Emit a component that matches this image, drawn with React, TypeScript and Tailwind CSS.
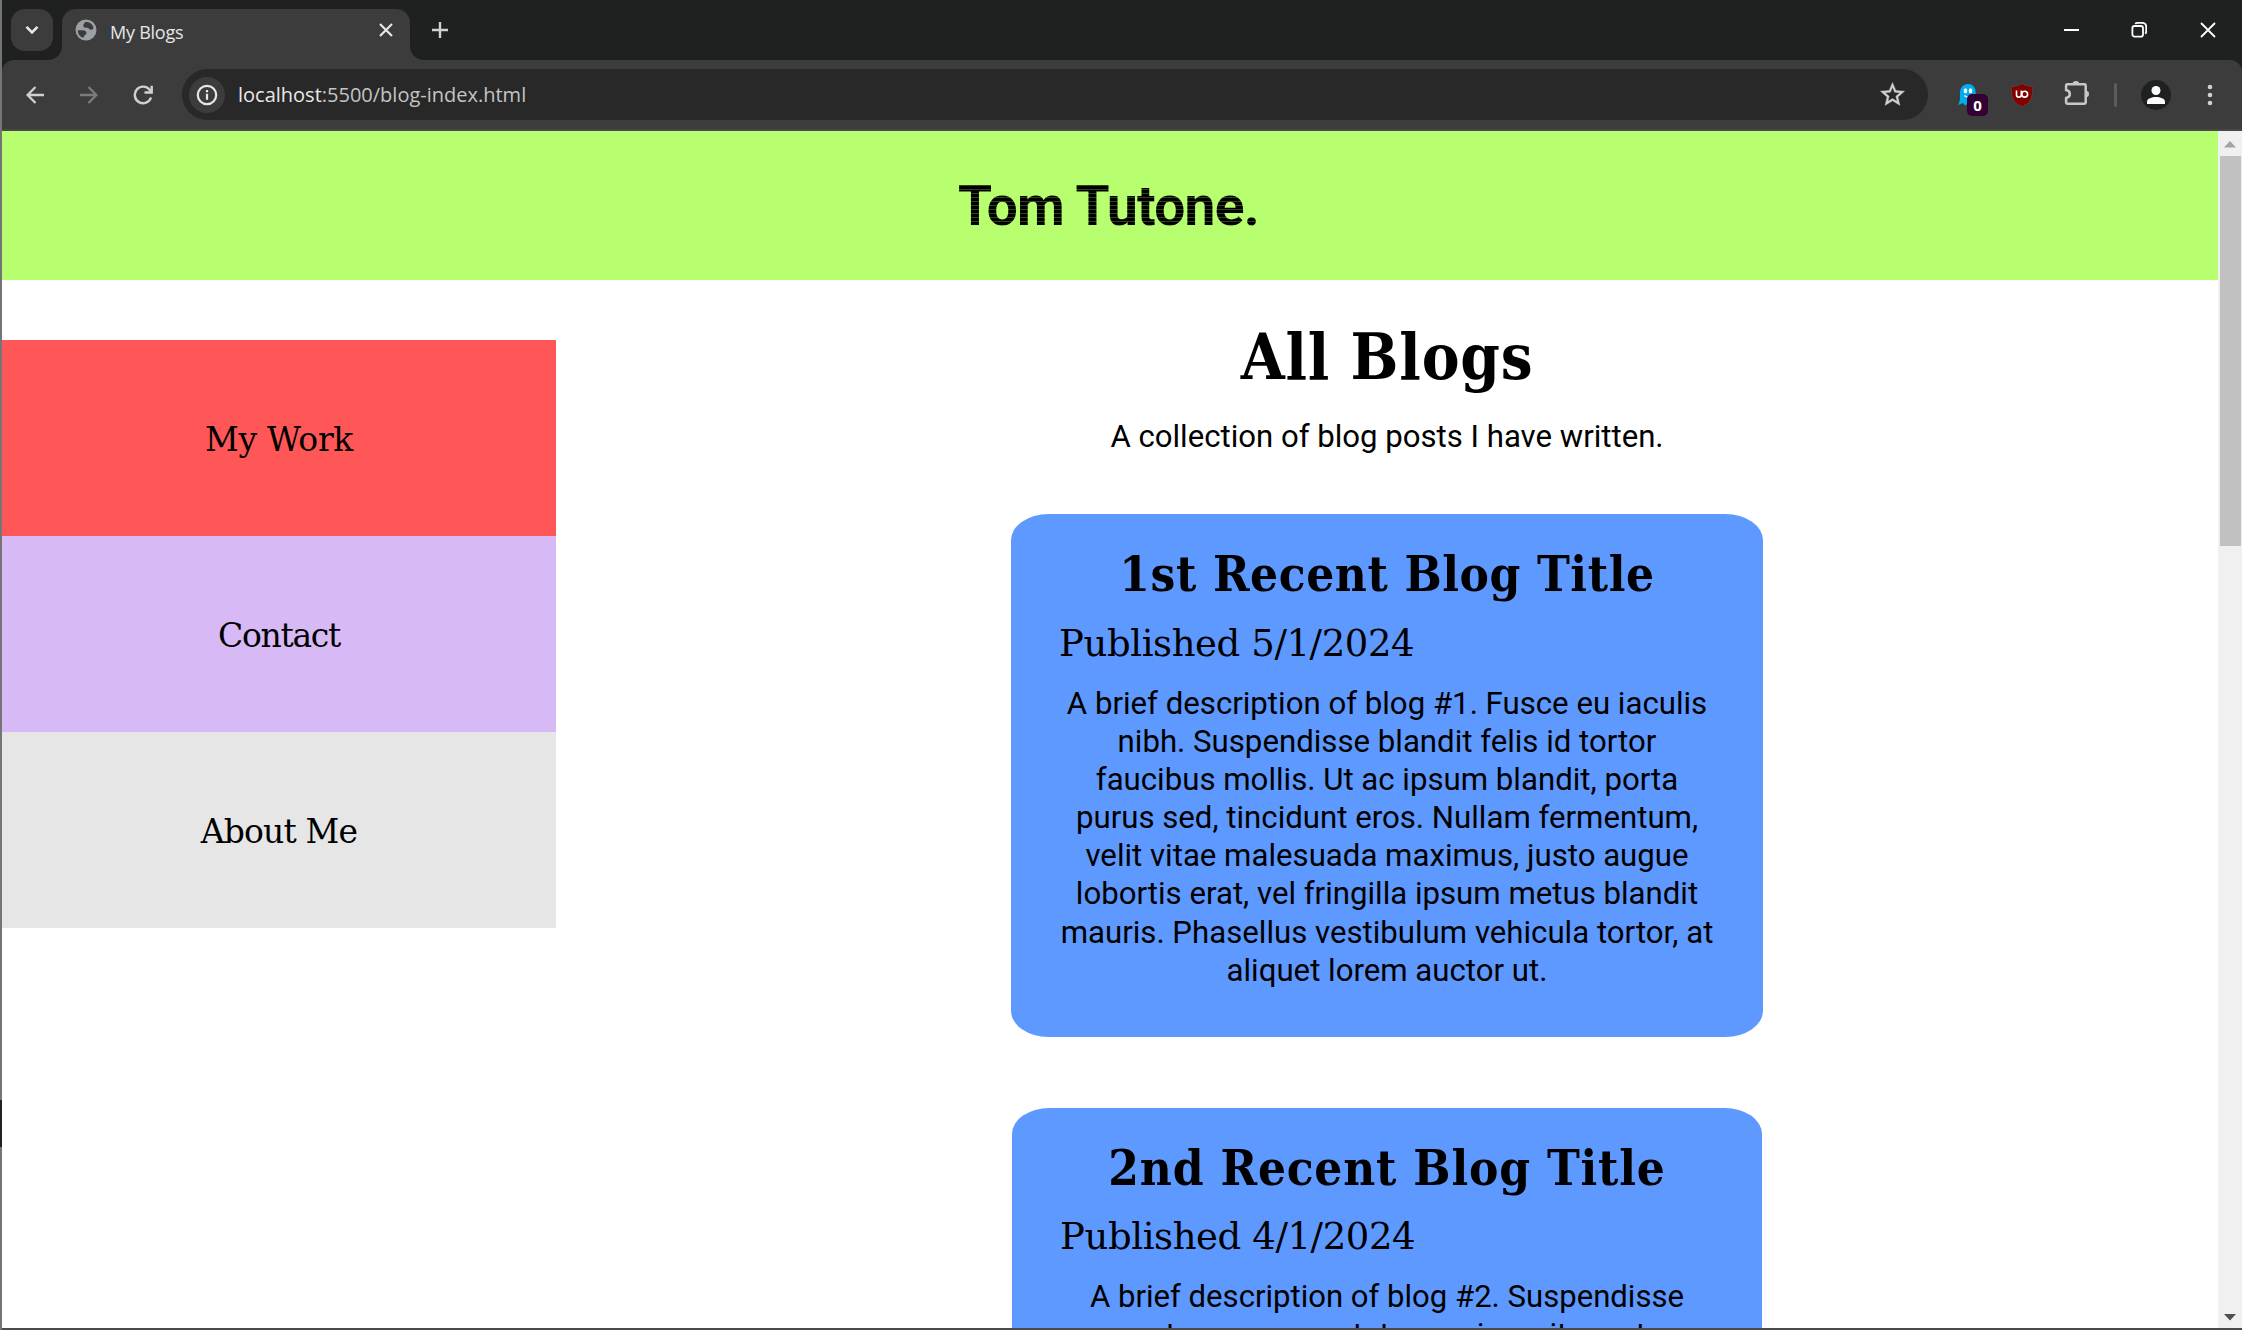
import type { ReactNode } from "react";

function Globe() {
  return (
    <svg viewBox="0 0 22 22" className="h-[22px] w-[22px]">
      <circle cx="11" cy="11" r="10.500" fill="#9aa0a6" />
      <path d="M10 3.200c1.800-.5 4-.1 5.500 1 1.600 1.200 2.700 2.800 3 4.800-.5 1.500-1.700 2-3 1.800-1.500-.3-1.600-1.700-3-2-1.200-.2-2.300.5-3.300-.4C8.200 7.300 8 6 8.700 5.200 9.300 4.500 9.200 3.700 10 3.200z" fill="#3c3c3c" />
      <path d="M2.800 11.200h5c1.900 0 3.600 1 3.600 2.800 0 1.500-1 2-1.900 2.400-.8.500-.3 1.700-1.300 2.400C5 17.700 2.800 14.700 2.800 11.200z" fill="#3c3c3c" />
    </svg>
  );
}

function Cross({ size, width }: { size: number; width: number }) {
  return (
    <svg width={size} height={size} viewBox={`0 0 ${size} ${size}`} stroke="currentColor" strokeWidth={width} fill="none">
      <path d={`M1 1L${size - 1} ${size - 1}M${size - 1} 1L1 ${size - 1}`} />
    </svg>
  );
}

function TitleBar() {
  return (
    <div className="flex h-[60px] bg-[#1f2120] pl-[9px] text-white">
      <div className="mt-[9px] flex h-[42px] w-[42px] items-center justify-center rounded-[14px] bg-[#3c3c3c]">
        <svg width="14" height="10" viewBox="0 0 14 10" fill="none" stroke="#e8e8e8" strokeWidth="2.6">
          <path d="M1.5 1.8L7 7.3l5.5-5.5" />
        </svg>
      </div>
      <div className="relative ml-[9px] mt-[9px] flex h-[51px] w-[348px] items-center rounded-t-[14px] bg-[#3c3c3c] pb-[9px]">
        <svg width="14" height="14" className="absolute -left-[14px] bottom-0" fill="#3c3c3c">
          <path d="M14 0v14H0A14 14 0 0 0 14 0z" />
        </svg>
        <svg width="14" height="14" className="absolute -right-[14px] bottom-0" fill="#3c3c3c">
          <path d="M0 0v14h14A14 14 0 0 1 0 0z" />
        </svg>
        <span className="ml-[13px]">
          <Globe />
        </span>
        <span className="ml-[13px] mt-[3px] flex-1 font-['Open_Sans',sans-serif] text-[18px] leading-6 tracking-[-0.25px] text-[#e6e6e6]">
          My Blogs
        </span>
        <span className="mr-[17px] text-[#e6e6e6]">
          <Cross size={14} width={2.2} />
        </span>
      </div>
      <div className="flex w-[60px] items-center justify-center">
        <svg width="16" height="16" viewBox="0 0 16 16" stroke="#d2d2d2" strokeWidth="2.4">
          <path d="M8 0v16M0 8h16" />
        </svg>
      </div>
      <div className="ml-auto flex items-center">
        <div className="flex w-[68px] justify-center">
          <div className="h-[2px] w-[15px] bg-white" />
        </div>
        <div className="flex w-[68px] justify-center">
          <svg width="16" height="16" viewBox="0 0 16 16" fill="none" stroke="white" strokeWidth="1.8">
            <rect x="1.4" y="4" width="10.6" height="10.6" rx="2.2" />
            <path d="M4.2 1.9c.6-.7 1.3-1 2.2-1H11c2.600 0 4.200 1.600 4.200 4.200V9.500c0 .9-.3 1.700-1 2.300" />
          </svg>
        </div>
        <div className="flex w-[69px] justify-center">
          <Cross size={16} width={1.8} />
        </div>
      </div>
    </div>
  );
}

function Slot({ children }: { children: ReactNode }) {
  return <div className="flex h-full w-[54px] shrink-0 items-center justify-center">{children}</div>;
}

function Toolbar() {
  return (
    <div className="bg-[#1f2120]">
      <div className="flex h-[71px] items-center rounded-t-[12px] border-b-2 border-[#484848] bg-[#3c3c3c] pl-[6px]">
        <Slot>
          <svg width="18" height="18" viewBox="0 0 18 18" fill="none" stroke="#d0d0d0" strokeWidth="2.3">
            <path d="M18 9H2M9.500 1L1.600 9l7.900 8" />
          </svg>
        </Slot>
        <Slot>
          <svg width="18" height="18" viewBox="0 0 18 18" fill="none" stroke="#7b7b7b" strokeWidth="2.3">
            <path d="M0 9h16M8.500 1l7.900 8-7.900 8" />
          </svg>
        </Slot>
        <Slot>
          <svg width="20" height="20" viewBox="0 0 20 20" fill="none" stroke="#d0d0d0" strokeWidth="2.4">
            <path d="M18 12.500A8.300 8.300 0 1 1 16.800 5l1.700 2" />
            <path d="M18.700 .8V7.500H11.500" />
          </svg>
        </Slot>
        <div className="ml-[12px] flex h-[51px] w-[1746px] shrink-0 items-center rounded-full bg-[#282828] pl-[7px]">
          <div className="flex h-[36px] w-[36px] items-center justify-center rounded-full bg-[#3c3c3c]">
            <svg width="22" height="22" viewBox="0 0 22 22" fill="none" stroke="#e8e8e8" strokeWidth="2.2">
              <circle cx="11" cy="11" r="9.200" />
              <path d="M11 9.800v6M11 6v2.200" />
            </svg>
          </div>
          <p className="ml-[13px] font-['Open_Sans',sans-serif] text-[20px] leading-7 text-[#c4c4c4]">
            <span className="text-[#e8e8e8]">localhost</span>:5500/blog-index.html
          </p>
          <svg viewBox="0 0 24 24" className="ml-auto mr-[21px] h-[29px] w-[29px]" fill="#d0d0d0" stroke="#d0d0d0" strokeWidth=".3">
            <path d="M22 9.240l-7.190-.62L12 2 9.190 8.630 2 9.240l5.460 4.730L5.820 21 12 17.270 18.180 21l-1.630-7.030L22 9.240zM12 15.400l-3.760 2.270 1-4.280-3.320-2.880 4.380-.38L12 6.100l1.710 4.040 4.380.38-3.320 2.880 1 4.280L12 15.400z" />
          </svg>
        </div>
        <div className="ml-[13px] flex h-full items-center">
          <Slot>
            <div className="relative h-[22px] w-[20px]">
              <svg width="20" height="22" viewBox="0 0 20 22">
                <path d="M2 9C2 3.500 5.400 0 10 0s7.600 3.500 7.600 8v6L19 20l-3.500-.5-2.500 2-3-2-3 2-2-2.500L0 21c1.600-2.500 2-5 2-8z" fill="#00aef0" />
                <ellipse cx="7.500" cy="6.800" rx="1.800" ry="2.500" fill="white" />
                <ellipse cx="12.500" cy="6.800" rx="1.800" ry="2.500" fill="white" />
                <path d="M6.500 11.500c2 2 5 2 7 0" stroke="white" strokeWidth="1.300" fill="none" />
              </svg>
              <span className="absolute left-[9px] top-[10px] flex h-[22px] w-[21px] items-center justify-center rounded-[5px] bg-[#330033] pt-[2px] font-['Open_Sans',sans-serif] text-[15px] font-bold leading-none text-white">
                0
              </span>
            </div>
          </Slot>
          <Slot>
            <svg width="22" height="24" viewBox="0 0 22 24" className="-ml-px">
              <path d="M11 .4C8 2.600 4.500 3.400.5 3.400 0 13 1.500 20 11 23.600 20.500 20 22 13 21.500 3.400 17.500 3.400 14 2.600 11 .4z" fill="#800000" stroke="#6e4a4a" strokeWidth=".6" />
              <path d="M5.500 7.500v4.200a2.400 2.400 0 0 0 4.800 0V7.500" fill="none" stroke="white" strokeWidth="1.600" />
              <circle cx="13.700" cy="11.200" r="2.900" fill="none" stroke="white" strokeWidth="1.600" />
            </svg>
          </Slot>
          <Slot>
            <svg width="26" height="26" viewBox="0 0 26 26" className="-mt-[3px] ml-[2px]" fill="none" stroke="#c8c8c8" strokeWidth="2.500">
              <path d="M3.300 4.300H20.500a1.200 1.200 0 0 1 1.200 1.200V22.500a1.200 1.200 0 0 1-1.200 1.200H3.300a1.200 1.200 0 0 1-1.200-1.200V18c5-1 5-7 0-8V5.500a1.200 1.200 0 0 1 1.200-1.200z" />
              <path d="M8.500 4.300a3.400 3.400 0 0 1 6.800 0zM21.700 10.800a3.300 3.300 0 0 1 0 6.600z" fill="#c8c8c8" stroke="none" />
            </svg>
          </Slot>
          <div className="flex w-[26px] justify-center">
            <div className="-ml-px h-[24px] w-[3px] rounded-full bg-[#5c5c5c]" />
          </div>
          <Slot>
            <div className="flex h-[30px] w-[30px] items-center justify-center rounded-full bg-[#1f2120]">
              <svg width="18" height="18" viewBox="0 0 18 18" fill="white">
                <circle cx="9" cy="4.500" r="4.500" />
                <path d="M0 18v-2.300C0 12.500 5 11 9 11s9 1.500 9 4.700V18z" />
              </svg>
            </div>
          </Slot>
          <Slot>
            <svg width="6" height="22" viewBox="0 0 6 22" fill="#d0d0d0">
              <circle cx="3" cy="3" r="2.300" />
              <circle cx="3" cy="11" r="2.300" />
              <circle cx="3" cy="19" r="2.300" />
            </svg>
          </Slot>
        </div>
      </div>
    </div>
  );
}

function SideNav() {
  const base =
    "flex h-[196px] items-center justify-center pt-[4px] font-['DejaVu_Serif',serif] text-[33px] leading-[40px]";
  return (
    <nav className="mt-[60px] w-[554px] shrink-0">
      <a className={`${base} bg-[#ff5757] tracking-[-0.3px]`}>My Work</a>
      <a className={`${base} bg-[#d7b9f5] tracking-[-1.3px]`}>Contact</a>
      <a className={`${base} bg-[#e6e6e6] tracking-[-0.85px]`}>About Me</a>
    </nav>
  );
}

const firstPost = [
  "A brief description of blog #1. Fusce eu iaculis",
  "nibh. Suspendisse blandit felis id tortor",
  "faucibus mollis. Ut ac ipsum blandit, porta",
  "purus sed, tincidunt eros. Nullam fermentum,",
  "velit vitae malesuada maximus, justo augue",
  "lobortis erat, vel fringilla ipsum metus blandit",
  "mauris. Phasellus vestibulum vehicula tortor, at",
  "aliquet lorem auctor ut.",
];

const secondPost = [
  "A brief description of blog #2. Suspendisse",
  "erat urna consectetur a mi eu sit amet,",
];

function Lines({ lines }: { lines: string[] }) {
  return (
    <>
      {lines.map((line) => (
        <span key={line} className="block whitespace-nowrap">
          {line}
        </span>
      ))}
    </>
  );
}

export default function App() {
  return (
    <div className="flex h-[1330px] w-[2242px] overflow-hidden bg-white text-black">
      <div className="flex w-[2px] shrink-0 flex-col bg-[#757575]">
        <div className="mt-[1100px] h-[47px] bg-[#222222]" />
      </div>
      <div className="flex w-[2240px] flex-col">
        <TitleBar />
        <Toolbar />
        <div className="flex h-[1197px] overflow-hidden">
          <div className="flex-1 overflow-hidden">
            <header className="flex h-[149px] items-center justify-center bg-[#b8ff70]">
              <h1 className="-ml-[3px] bg-[repeating-linear-gradient(to_bottom,#000_0px,#000_3px,#2c4418_3px,#2c4418_4px)] bg-clip-text font-['Roboto',sans-serif] text-[55px] font-bold leading-[64px] tracking-[-0.7px] text-transparent">
                Tom Tutone.
              </h1>
            </header>
            <div className="flex">
              <SideNav />
              <main className="flex flex-1 flex-col items-center pt-[37px]">
                <h2 className="font-['DejaVu_Serif_Condensed','DejaVu_Serif',serif] text-[63px] font-bold leading-[80px] tracking-[0.8px]">
                  All Blogs
                </h2>
                <p className="mt-[21px] font-['Roboto',sans-serif] text-[31.15px] leading-[38px]">
                  A collection of blog posts I have written.
                </p>
                <article className="mt-[58px] h-[523px] w-[752px] shrink-0 rounded-[5%] bg-[#5e99ff] px-[48px] pt-[30px] text-center">
                  <h3 className="whitespace-nowrap font-['DejaVu_Serif_Condensed','DejaVu_Serif',serif] text-[49px] font-bold leading-[60px] tracking-[0.6px]">
                    1st Recent Blog Title
                  </h3>
                  <p className="mt-[17px] text-left font-['DejaVu_Serif',serif] text-[37px] leading-[46px] tracking-[-0.4px]">
                    Published 5/1/2024
                  </p>
                  <div className="mt-[18px] font-['Roboto',sans-serif] text-[31.2px] leading-[38.1px]">
                    <Lines lines={firstPost} />
                  </div>
                </article>
                <article className="mt-[71px] h-[520px] w-[750px] shrink-0 rounded-[5%] bg-[#5e99ff] px-[48px] pt-[30px] text-center">
                  <h3 className="whitespace-nowrap font-['DejaVu_Serif_Condensed','DejaVu_Serif',serif] text-[49px] font-bold leading-[60px] tracking-[0.8px]">
                    2nd Recent Blog Title
                  </h3>
                  <p className="mt-[16px] text-left font-['DejaVu_Serif',serif] text-[37px] leading-[46px] tracking-[-0.4px]">
                    Published 4/1/2024
                  </p>
                  <div className="mt-[18px] font-['Roboto',sans-serif] text-[31.1px] leading-[38px]">
                    <Lines lines={secondPost} />
                  </div>
                </article>
              </main>
            </div>
          </div>
          <div className="flex w-[24px] shrink-0 flex-col items-center bg-[#f0f0f0]">
            <svg width="12" height="7" className="mt-[10px]" fill="#a3a3a3">
              <path d="M6 0l6 6.500H0z" />
            </svg>
            <div className="mt-[8px] h-[390px] w-[21px] bg-[#c1c1c1]" />
            <svg width="12" height="7" className="mb-[7px] mt-auto" fill="#505050">
              <path d="M0 0h12L6 6.500z" />
            </svg>
          </div>
        </div>
        <div className="h-[2px] bg-[#4a4a4a]" />
      </div>
    </div>
  );
}
